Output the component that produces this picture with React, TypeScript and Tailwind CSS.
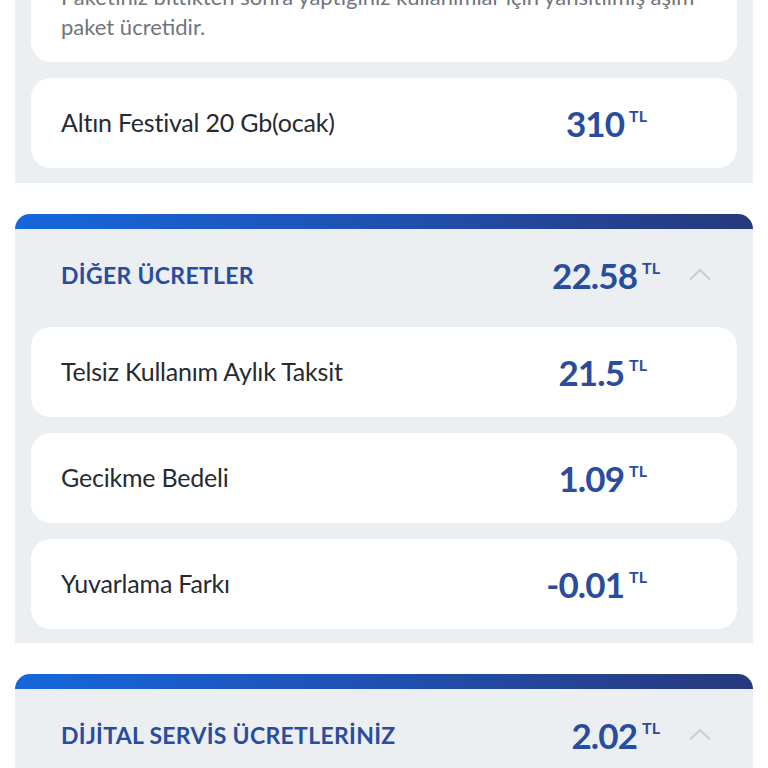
import React from 'react';

interface Row {
  label: string;
  amount: string;
}

const font = { fontFamily: 'Lato, "Noto Sans", sans-serif' };

function Amount({ value }: { value: string }) {
  return (
    <div className="flex items-start text-[#2a4c9e] font-bold">
      <span className="text-[35px] leading-none tracking-[-0.9px]">{value}</span>
      <span className="text-[16px] leading-none ml-[5px] mt-[2px]">TL</span>
    </div>
  );
}

function Card({ label, amount }: Row) {
  return (
    <div className="h-[90px] bg-white rounded-[20px] flex items-center justify-between pl-[30px] pr-[90px]">
      <span className="text-[25px] text-[#262a31] tracking-[-0.2px]">{label}</span>
      <Amount value={amount} />
    </div>
  );
}

function ChevronUp() {
  return (
    <svg width="22" height="14" viewBox="0 0 22 14" fill="none" className="-mt-[2px]">
      <path d="M1.5 12 L11 3 L20.5 12" stroke="#c9ced4" strokeWidth="2.2" strokeLinecap="round" strokeLinejoin="round" />
    </svg>
  );
}

function Section({ title, total, rows }: { title: string; total: string; rows: Row[] }) {
  return (
    <div className="mx-[15px]">
      <div className="h-[15px] rounded-t-[16px] bg-gradient-to-r from-[#1467dc] via-[#1f50b0] to-[#26397c]" />
      <div className="bg-[#ebeff2] px-[16px] pb-[14px]">
        <div className="h-[92px] flex items-center justify-between pl-[30px] pr-[26px]">
          <span className="text-[23px] font-bold text-[#2a4c9e] tracking-[0.3px]">{title}</span>
          <div className="flex items-center gap-[29px]">
            <Amount value={total} />
            <ChevronUp />
          </div>
        </div>
        <div className="flex flex-col gap-[16px] mt-[6px]">
          {rows.map((r) => (
            <Card key={r.label} {...r} />
          ))}
        </div>
      </div>
    </div>
  );
}

export default function App() {
  return (
    <div className="w-[768px] h-[768px] overflow-hidden bg-white" style={font}>
      <div className="-mt-[40px]">
        <div className="mx-[15px] bg-[#ebeff2] px-[16px] pb-[15px] flex flex-col gap-[16px]">
          <div className="bg-white rounded-b-[20px] pl-[30px] pr-[20px] pt-[22px] pb-[20px]">
            <p className="text-[22px] leading-[30px] text-[#70757c]">
              Paketiniz bittikten sonra yaptığınız kullanımlar için yansıtılmış aşım
              <br />
              paket ücretidir.
            </p>
          </div>
          <Card label="Altın Festival 20 Gb(ocak)" amount="310" />
        </div>
        <div className="h-[31px]" />
        <Section
          title="DİĞER ÜCRETLER"
          total="22.58"
          rows={[
            { label: 'Telsiz Kullanım Aylık Taksit', amount: '21.5' },
            { label: 'Gecikme Bedeli', amount: '1.09' },
            { label: 'Yuvarlama Farkı', amount: '-0.01' },
          ]}
        />
        <div className="h-[31px]" />
        <Section title="DİJİTAL SERVİS ÜCRETLERİNİZ" total="2.02" rows={[]} />
      </div>
    </div>
  );
}
